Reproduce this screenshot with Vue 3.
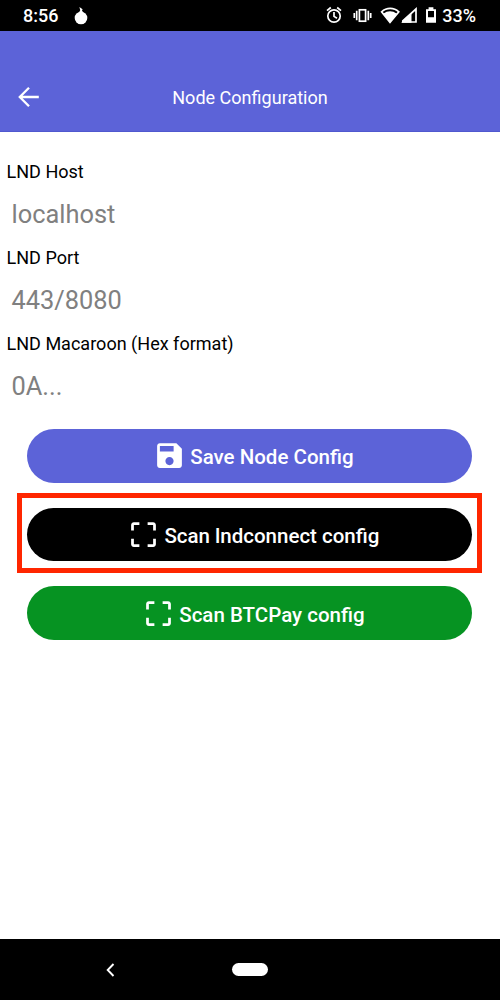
<script setup>
const fields = [
  { label: 'LND Host', placeholder: 'localhost' },
  { label: 'LND Port', placeholder: '443/8080' },
  { label: 'LND Macaroon (Hex format)', placeholder: '0A...' },
]
const save = 'M17 3H5C3.9 3 3 3.9 3 5V19C3 20.1 3.9 21 5 21H19C20.1 21 21 20.1 21 19V7L17 3M12 19C10.34 19 9 17.66 9 16S10.34 13 12 13 15 14.34 15 16 13.66 19 12 19M15 9H5V5H15V9Z'
const scan = 'M19 3H15V5H19V9H21V5C21 3.9 20.1 3 19 3M19 19H15V21H19C20.1 21 21 20.1 21 19V15H19M5 15H3V19C3 20.1 3.9 21 5 21H9V19H5M3 5V9H5V5H9V3H5C3.9 3 3 3.9 3 5Z'
const buttons = [
  { text: 'Save Node Config', kind: 'save', icon: save },
  { text: 'Scan lndconnect config', kind: 'lnd', icon: scan },
  { text: 'Scan BTCPay config', kind: 'btc', icon: scan },
]
</script>

<template>
  <div class="screen">
    <div class="status">
      <span class="time">8:56</span>
      <svg class="drop" width="14" height="19" viewBox="0 0 14 19" fill="#fff">
        <circle cx="7" cy="12" r="6.3" />
        <path d="M4.6 7L6.2 4.2 5.4 1 8.6 3.2 8 4.4 9.6 7z" />
      </svg>
      <span class="spacer"></span>
      <svg width="110" height="30" viewBox="326 0 110 30" class="icons">
        <g fill="none" stroke="#fff" stroke-width="1.7">
          <circle cx="334" cy="16" r="6.2" />
          <path d="M334 12v4.4l3 1.9M327 10.6l3.8-3.1M341 10.6l-3.8-3.1" />
          <rect x="359.4" y="9.8" width="6.2" height="11.4" />
          <path d="M356.7 10.8v9.4M368.3 10.8v9.4M354.3 13v5M370.7 13v5" />
          <path d="M381.6 11.8c5-4.7 12.2-4.7 17.2 0L390 22.3z" />
          <path d="M402.8 22V20.8L416 9v13z" />
        </g>
        <path fill="#fff" d="M383.4 13.6c4-3.3 9.2-3.3 13.4 0L390 22.8zM401.2 22.8L411.5 13v9.8z" />
        <path fill="#fff" fill-rule="evenodd" d="M428.6 7.3h4.8v1.9h2.6v13.6h-10V9.2h2.6zM428 11v6.2h6V11z" />
      </svg>
      <span class="percent">33%</span>
    </div>
    <header class="header">
      <svg width="22" height="22" viewBox="0 0 22 22" fill="none" stroke="#fff" stroke-width="2.3">
        <path d="M11 1.8L1.8 11l9.2 9.2M2 11h18.8" />
      </svg>
      <h1>Node Configuration</h1>
    </header>
    <main>
      <div v-for="f in fields" :key="f.label" class="field">
        <label>{{ f.label }}</label>
        <div class="value">{{ f.placeholder }}</div>
      </div>
      <div class="buttons">
        <div v-for="b in buttons" :key="b.kind" class="slot" :class="'slot-' + b.kind">
          <div class="button" :class="b.kind">
            <svg width="33" height="33" viewBox="0 0 24 24" fill="#fff"><path :d="b.icon" /></svg>
            <span>{{ b.text }}</span>
          </div>
        </div>
      </div>
    </main>
    <nav>
      <svg class="back" width="9" height="14" viewBox="0 0 9 14" fill="none" stroke="#fff" stroke-width="1.9">
        <path d="M7.5 1L1.7 7l5.8 6" />
      </svg>
      <span class="home"></span>
    </nav>
  </div>
</template>

<style>
body { margin: 0; }
</style>

<style scoped>
.screen {
  width: 500px;
  height: 1000px;
  overflow: hidden;
  display: flex;
  flex-direction: column;
  background: #fff;
  font-family: Roboto, sans-serif;
}
.status {
  height: 30.5px;
  flex: none;
  background: #000;
  color: #fff;
  display: flex;
  align-items: flex-start;
  box-sizing: border-box;
  padding: 0 24px 0 23px;
  font-size: 18px;
  font-weight: 500;
  line-height: 32px;
}
.drop { margin: 6px 0 0 16px; }
.spacer { flex: 1; }
.icons { margin-right: 6px; }
.header {
  height: 101px;
  flex: none;
  box-sizing: border-box;
  background: #5c63d8;
  border-bottom: 1px solid #5058cf;
  display: grid;
  grid-template-columns: 22px 1fr 22px;
  align-items: center;
  padding: 33px 18px 0;
}
h1 {
  margin: 0;
  color: #fff;
  font-size: 18.05px;
  font-weight: 400;
  text-align: center;
}
main {
  flex: 1;
  padding-top: 28px;
}
.field { height: 86px; }
label {
  display: block;
  padding-left: 6.5px;
  font-size: 18.05px;
  line-height: 24px;
  color: #000;
}
.value {
  padding: 12.5px 0 0 11.5px;
  font-size: 25.4px;
  line-height: 36px;
  color: #808080;
}
.buttons {
  display: flex;
  flex-direction: column;
  padding: 11.8px 18px 0 17.3px;
}
.slot { padding: 0 10px; }
.slot-lnd {
  margin: 10.7px 0 13.2px;
  padding: 9.3px 5px 7.3px;
  border: 5px solid #ff2600;
}
.button {
  height: 53.3px;
  border-radius: 27px;
  display: flex;
  align-items: center;
  justify-content: center;
  color: #fff;
  font-size: 20.5px;
  font-weight: 500;
}
.button svg { margin: 0 4.5px 0 7px; }
.button span { padding-top: 3px; }
.save { background: #5c63d8; }
.lnd { background: #000; }
.btc { background: #069322; }
nav {
  height: 61px;
  flex: none;
  background: #000;
  display: flex;
  align-items: center;
}
.back { margin-left: 106px; }
.home {
  width: 36px;
  height: 13px;
  border-radius: 7px;
  margin-left: 117px;
  background: #fff;
}
</style>
